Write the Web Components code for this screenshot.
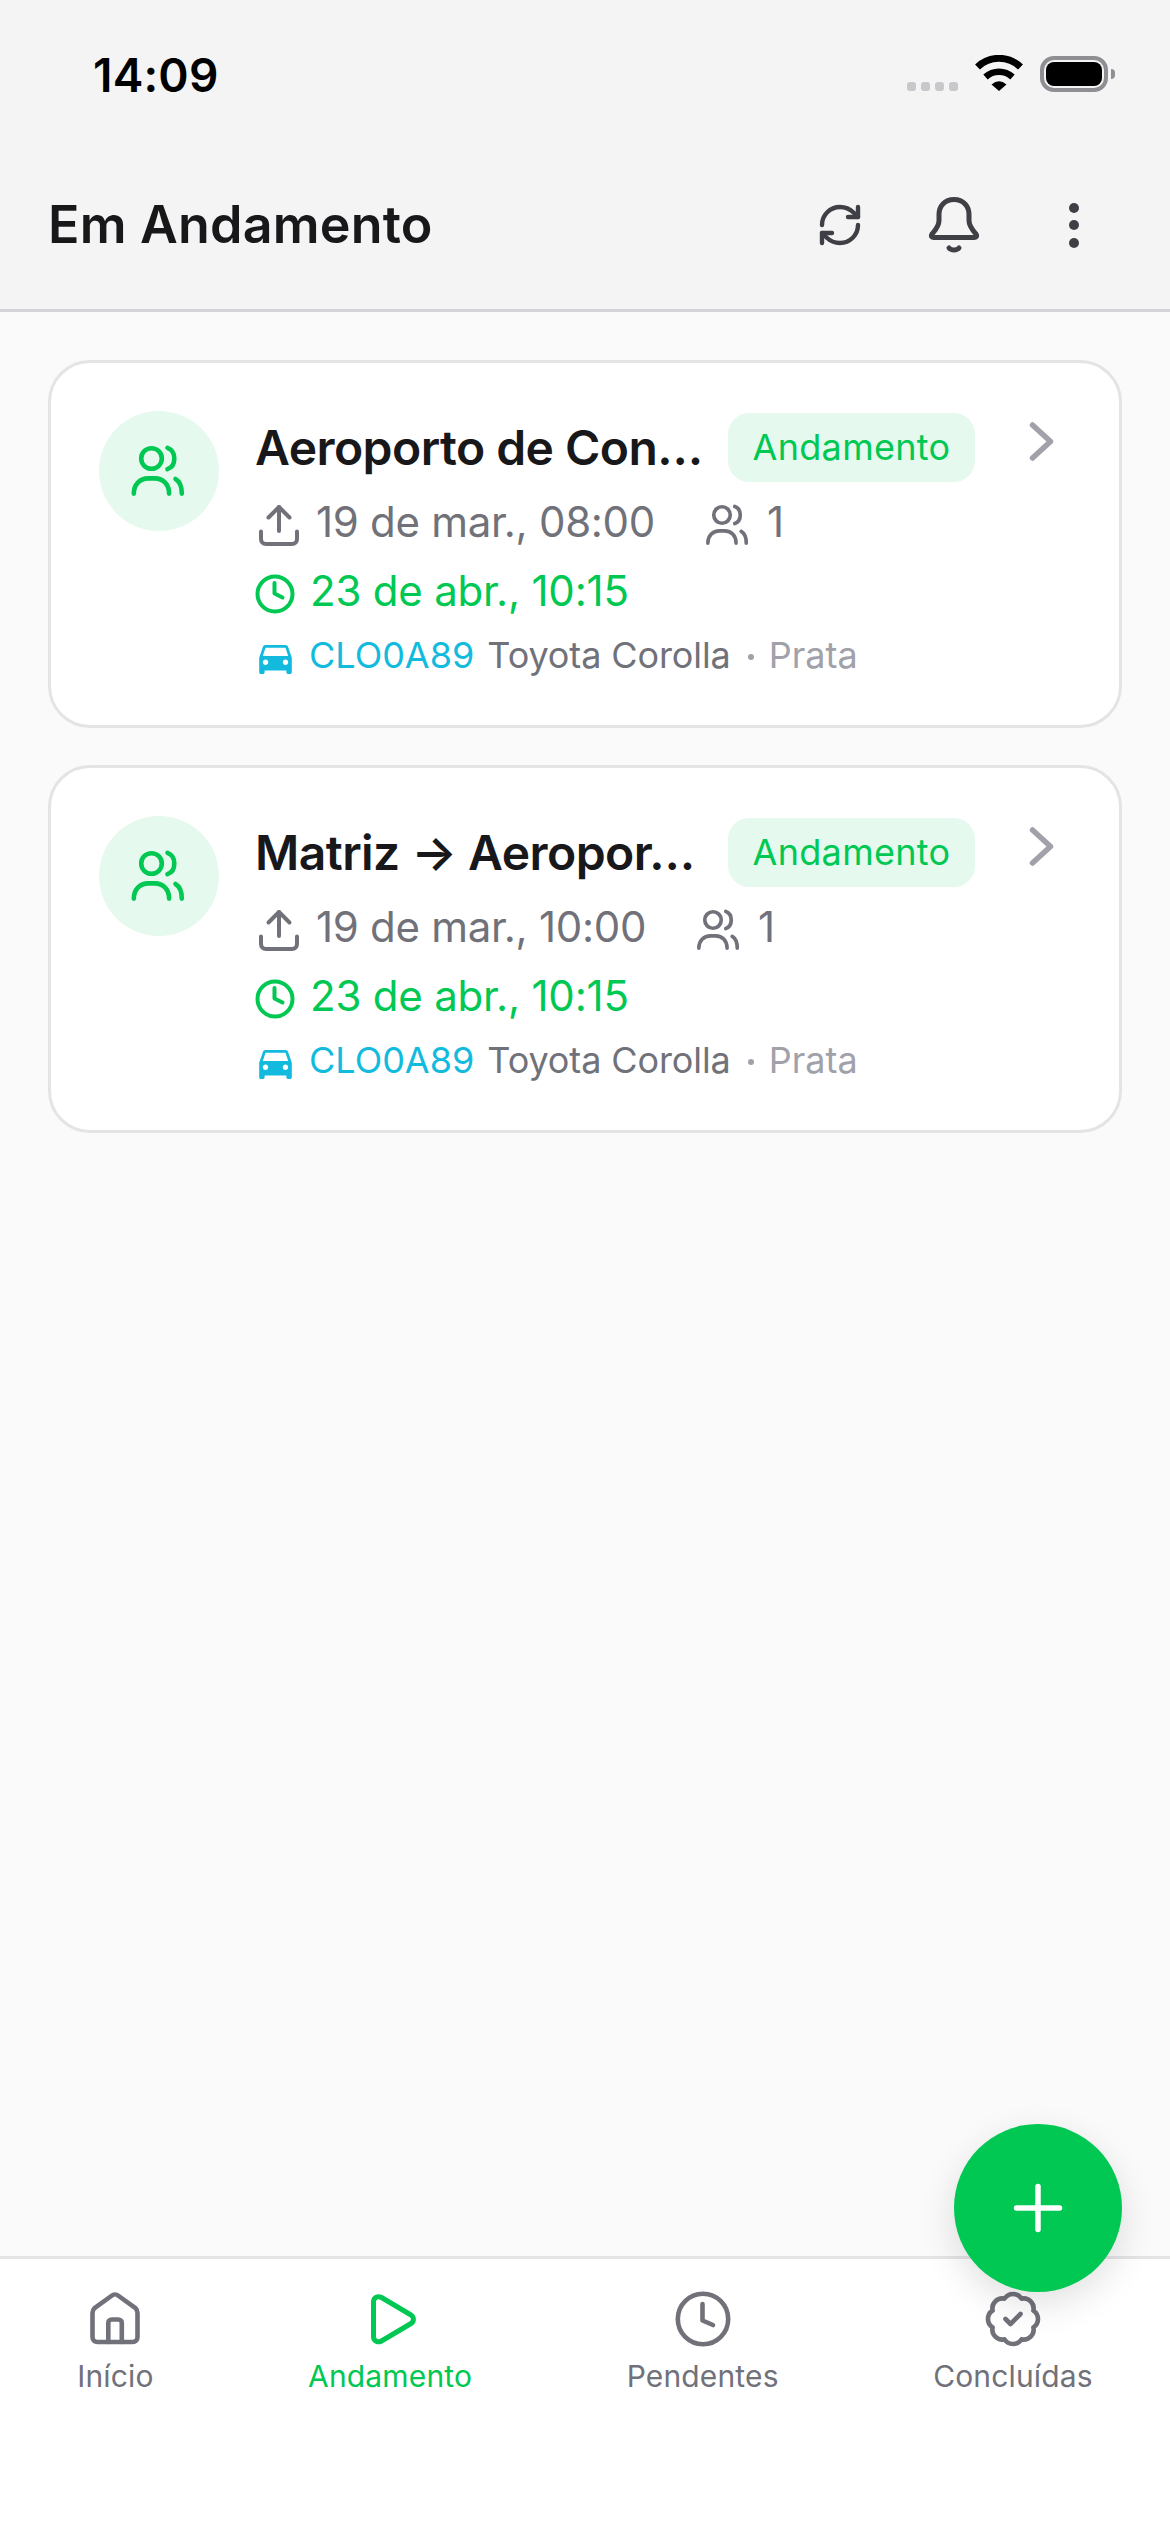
<!DOCTYPE html>
<html lang="pt-BR">
<head>
<meta charset="utf-8">
<title>Em Andamento</title>
<style>
  html, body { margin: 0; padding: 0; }
  body { font-family: Inter, "Noto Sans", sans-serif; background: #fafafa; }
</style>
</head>
<body>
<app-shell>
  <status-bar slot="status" time="14:09"></status-bar>
  <app-header slot="header">Em Andamento</app-header>

  <trip-card depart="19 de mar., 08:00" eta="23 de abr., 10:15" seats="1" plate="CLO0A89" model="Toyota Corolla" color="Prata" status="Andamento">Aeroporto de Con…</trip-card>
  <trip-card depart="19 de mar., 10:00" eta="23 de abr., 10:15" seats="1" plate="CLO0A89" model="Toyota Corolla" color="Prata" status="Andamento">Matriz → Aeropor…</trip-card>

  <fab-button slot="fab"></fab-button>

  <tab-bar slot="tabs">
    <tab-item icon="home">Início</tab-item>
    <tab-item icon="play" active>Andamento</tab-item>
    <tab-item icon="clock">Pendentes</tab-item>
    <tab-item icon="badge">Concluídas</tab-item>
  </tab-bar>
</app-shell>

<script>
const ICONS = {
  refresh: { box: '0 0 24 24', sw: 2.2, d: '<path d="M3 12a9 9 0 0 1 9-9 9.75 9.75 0 0 1 6.74 2.74L21 8"/><path d="M21 3v5h-5"/><path d="M21 12a9 9 0 0 1-9 9 9.75 9.75 0 0 1-6.74-2.74L3 16"/><path d="M8 16H3v5"/>' },
  bell: { box: '0 0 60 60', sw: 5, d: '<path d="M30 4.5c-9.5 0-15 7-15 15v6c0 6-4 10-7 13.5-1.5 2-.5 3.5 1.5 3.5h41c2 0 3-1.5 1.5-3.5-3-3.5-7-7.500-7-13.500v-6c0-8-5.500-15-15-15z"/><path d="M25 53c2 2.500 8 2.500 10 0"/>' },
  users: { box: '0 0 60 60', sw: 4.6, d: '<circle cx="22.500" cy="17.500" r="10.300"/><path d="M38.500 6.800c4.500 1.600 6.800 5.800 6.800 10.700s-2.300 9.100-6.800 10.700"/><path d="M4.800 52.600c0-9 6-15.200 14.500-15.200h6.500c8.500 0 14.300 6.200 14.300 15.200"/><path d="M46.500 38c4.300 2.500 6.300 8 6.300 14.600"/>' },
  upload: { box: '0 0 44 44', sw: 4, d: '<path d="M22 4v24"/><path d="M11.500 14.500 22 4l10.500 10.500"/><path d="M4 28.500V36c0 3 2 5 5 5h26c3 0 5-2 5-5v-7.500"/>' },
  eta: { box: '0 0 40 40', sw: 4, d: '<circle cx="20" cy="20" r="17.500"/><path d="M19.500 9v10.500l8 4"/>' },
  chevron: { box: '0 0 60 60', sw: 5.500, d: '<path d="M21.500 14 39.500 30.500 21.500 47"/>' },
  home: { box: '0 0 60 60', sw: 4.600, d: '<path d="M7.500 24c0-2 .7-3.600 2-4.900L27 6.500c1.600-1.400 4.400-1.400 6 0L50.500 19.100c1.300 1.300 2 2.900 2 4.900v24c0 3-2 5-5 5h-35c-3 0-5-2-5-5z"/><path d="M23.300 53V34c0-2 1.500-3.500 3.500-3.500h6.500c2 0 3.500 1.500 3.500 3.500v19"/>' },
  play: { box: '0 0 60 60', sw: 5, d: '<path d="M13.500 13c0-4.500 4.500-6.500 8-4.500L51 26c3.200 2 3.200 6.500 0 8.500L21.500 52c-3.500 2-8 0-8-4.500z"/>' },
  clock: { box: '0 0 60 60', sw: 4.600, d: '<circle cx="30" cy="30" r="25.200"/><path d="M29.500 15v16.500l10.500 4.500"/>' },
  badge: { box: '0 0 24 24', sw: 1.850, d: '<path d="M3.850 8.620a4 4 0 0 1 4.780-4.770 4 4 0 0 1 6.740 0 4 4 0 0 1 4.780 4.780 4 4 0 0 1 0 6.740 4 4 0 0 1-4.770 4.780 4 4 0 0 1-6.750 0 4 4 0 0 1-4.780-4.770 4 4 0 0 1 0-6.760Z"/><path d="m9 12 2 2 4-4"/>' },
  plus: { box: '0 0 48 48', sw: 5.500, d: '<path d="M24 2.500v43"/><path d="M2.500 24h43"/>' }
};

class UiIcon extends HTMLElement {
  connectedCallback() {
    const icon = ICONS[this.getAttribute('name')];
    const size = this.getAttribute('size') || 60;
    this.attachShadow({ mode: 'open' }).innerHTML = `
      <style>
        :host { display: block; width: ${size}px; height: ${size}px; flex: none; }
        svg { display: block; width: 100%; height: 100%; overflow: visible; }
      </style>
      <svg viewBox="${icon.box}" fill="none" stroke="currentColor" stroke-width="${icon.sw}" stroke-linecap="round" stroke-linejoin="round">${icon.d}</svg>`;
  }
}

class AppShell extends HTMLElement {
  constructor() {
    super();
    this.attachShadow({ mode: 'open' }).innerHTML = `
      <style>
        :host { display: flex; flex-direction: column; position: relative; width: 1170px; height: 2532px; background: #fafafa; overflow: hidden; }
        .top { background: #f4f4f5; border-bottom: 3px solid #d4d4d8; }
        main { flex: 1; display: flex; flex-direction: column; gap: 37px; padding: 48px; min-height: 0; }
        .fab { position: absolute; right: 48px; bottom: 240px; z-index: 2; }
      </style>
      <div class="top"><slot name="status"></slot><slot name="header"></slot></div>
      <main><slot></slot></main>
      <slot name="tabs"></slot>
      <div class="fab"><slot name="fab"></slot></div>`;
  }
}

class StatusBar extends HTMLElement {
  connectedCallback() {
    this.attachShadow({ mode: 'open' }).innerHTML = `
      <style>
        :host { display: flex; justify-content: space-between; height: 141px; box-sizing: border-box; padding: 48px 55px 0 93px; }
        .time { font: 600 46px/54px Inter, sans-serif; color: #000; letter-spacing: .2px; }
        .icons { display: flex; align-items: flex-end; gap: 17px; height: 37px; margin-top: 7px; }
        .cell { display: flex; gap: 5px; margin-bottom: 1px; }
        .cell i { width: 9px; height: 9px; border-radius: 3px; background: #c7c7cc; }
        .wifi { width: 48px; height: 36px; display: block; margin-bottom: 1px; }
        .battery { display: flex; align-items: center; gap: 3px; }
        .shell { width: 68px; height: 36px; box-sizing: border-box; border: 4px solid #8e8e93; border-radius: 14px; padding: 2px; }
        .shell b { display: block; height: 100%; background: #000; border-radius: 8px; }
        .nub { width: 4px; height: 10px; background: #8e8e93; border-radius: 0 5px 5px 0; }
      </style>
      <div class="time">${this.getAttribute('time')}</div>
      <div class="icons">
        <div class="cell"><i></i><i></i><i></i><i></i></div>
        <svg class="wifi" viewBox="0 0 48 36" fill="none" stroke="#000">
          <path d="M2.500 12A31 31 0 0 1 45.500 12" stroke-width="7"/>
          <path d="M10.500 22A20 20 0 0 1 37.500 22" stroke-width="6.500"/>
          <path d="M16.500 29.500Q24 23 31.500 29.500L24 36Z" fill="#000" stroke="none"/>
        </svg>
        <div class="battery"><div class="shell"><b></b></div><div class="nub"></div></div>
      </div>`;
  }
}

class AppHeader extends HTMLElement {
  constructor() {
    super();
    this.attachShadow({ mode: 'open' }).innerHTML = `
      <style>
        :host { display: flex; align-items: center; height: 168px; padding: 0 66px 0 48px; }
        h1 { flex: 1; margin: 0; font: 600 52px/64px Inter, sans-serif; letter-spacing: .2px; color: #18181b; }
        .actions { display: flex; align-items: center; gap: 60px; color: #3f3f46; }
        .dots { display: flex; flex-direction: column; align-items: center; justify-content: center; gap: 7.5px; width: 60px; height: 60px; }
        .dots i { width: 10px; height: 10px; border-radius: 50%; background: currentColor; }
      </style>
      <h1><slot></slot></h1>
      <div class="actions">
        <ui-icon name="refresh" size="48"></ui-icon>
        <ui-icon name="bell" size="60"></ui-icon>
        <div class="dots"><i></i><i></i><i></i></div>
      </div>`;
  }
}

class TripCard extends HTMLElement {
  connectedCallback() {
    const a = (n) => this.getAttribute(n);
    this.attachShadow({ mode: 'open' }).innerHTML = `
      <style>
        :host { display: flex; gap: 36px; box-sizing: border-box; height: 368px; padding: 48px; background: #fff; border: 3px solid #e4e4e7; border-radius: 42px; color: #71717a; }
        .avatar { width: 120px; height: 120px; border-radius: 50%; background: #e6f9ee; color: #00c853; display: flex; align-items: center; justify-content: center; flex: none; }
        .body { flex: 1; min-width: 0; display: flex; flex-direction: column; }
        .head { display: flex; height: 71px; margin-bottom: 10px; }
        .name { flex: 1; min-width: 0; font: 600 48px/73px Inter, sans-serif; letter-spacing: -.55px; color: #18181b; white-space: nowrap; overflow: hidden; }
        .status { width: 247px; box-sizing: border-box; height: 69px; margin: 2px 36px 0 28px; text-align: center; border-radius: 21px; background: #e6f9ee; color: #00c853; font: 400 36px/69px Inter, sans-serif; letter-spacing: .3px; }
        .chev { color: #a1a1aa; }
        .row { display: flex; align-items: center; font: 400 42px/60px Inter, sans-serif; letter-spacing: -.3px; white-space: nowrap; }
        .row.eta { color: #00c853; margin-top: 9px; gap: 15px; letter-spacing: -.2px; }
        .row.times ui-icon, .row.eta ui-icon { margin-top: 6px; }
        .up { margin: 0 15px 0 2px; }
        .people { margin: 0 15px 0 49px; }
        .car { display: flex; align-items: center; margin-top: 10px; font: 400 36px/48px Inter, sans-serif; white-space: nowrap; }
        .car svg { width: 33px; height: 29px; margin: 8px 17px 0 4px; flex: none; fill: #12bbde; }
        .plate { color: #12bbde; margin-right: 13px; }
        .model { letter-spacing: -.1px; }
        .dot { width: 6px; height: 6px; border-radius: 50%; background: #a1a1aa; margin: 3px 15px 0 17px; }
        .color { color: #a1a1aa; }
      </style>
      <div class="avatar"><ui-icon name="users" size="60"></ui-icon></div>
      <div class="body">
        <div class="head">
          <div class="name"><slot></slot></div>
          <div class="status">${a('status')}</div>
          <ui-icon class="chev" name="chevron" size="60"></ui-icon>
        </div>
        <div class="row times">
          <ui-icon class="up" name="upload" size="44"></ui-icon>
          <span>${a('depart')}</span>
          <ui-icon class="people" name="users" size="48"></ui-icon>
          <span>${a('seats')}</span>
        </div>
        <div class="row eta">
          <ui-icon name="eta" size="40"></ui-icon>
          <span>${a('eta')}</span>
        </div>
        <div class="car">
          <svg viewBox="3 5 18 16"><path d="M18.920 6.010C18.720 5.420 18.160 5 17.500 5h-11c-.66 0-1.210.42-1.420 1.010L3 12v8c0 .55.45 1 1 1h1c.55 0 1-.45 1-1v-1h12v1c0 .55.45 1 1 1h1c.55 0 1-.45 1-1v-8l-2.080-5.990zM6.500 16c-.83 0-1.500-.67-1.500-1.500S5.670 13 6.500 13s1.500.67 1.500 1.500S7.330 16 6.500 16zm11 0c-.83 0-1.500-.67-1.500-1.500s.67-1.500 1.500-1.500 1.500.67 1.500 1.500-.67 1.500-1.500 1.500zM5 11l1.500-4.500h11L19 11H5z"/></svg>
          <span class="plate">${a('plate')}</span>
          <span class="model">${a('model')}</span>
          <i class="dot"></i>
          <span class="color">${a('color')}</span>
        </div>
      </div>`;
  }
}

class FabButton extends HTMLElement {
  constructor() {
    super();
    this.attachShadow({ mode: 'open' }).innerHTML = `
      <style>
        :host { display: flex; align-items: center; justify-content: center; width: 168px; height: 168px; border-radius: 50%; background: #00c853; color: #fff; box-shadow: 0 12px 36px rgba(0, 0, 0, .12); }
      </style>
      <ui-icon name="plus" size="48"></ui-icon>`;
  }
}

class TabBar extends HTMLElement {
  constructor() {
    super();
    this.attachShadow({ mode: 'open' }).innerHTML = `
      <style>
        :host { display: flex; justify-content: space-around; height: 276px; box-sizing: border-box; padding-top: 29.500px; background: #fff; border-top: 3px solid #e4e4e7; }
      </style>
      <slot></slot>`;
  }
}

class TabItem extends HTMLElement {
  connectedCallback() {
    const active = this.hasAttribute('active');
    this.attachShadow({ mode: 'open' }).innerHTML = `
      <style>
        :host { display: flex; flex-direction: column; align-items: center; gap: 7.500px; color: ${active ? '#00c853' : '#71717a'}; }
        span { font: 400 30px/40px Inter, sans-serif; letter-spacing: .15px; }
      </style>
      <ui-icon name="${this.getAttribute('icon')}" size="60"></ui-icon>
      <span><slot></slot></span>`;
  }
}

customElements.define('ui-icon', UiIcon);
customElements.define('app-shell', AppShell);
customElements.define('status-bar', StatusBar);
customElements.define('app-header', AppHeader);
customElements.define('trip-card', TripCard);
customElements.define('fab-button', FabButton);
customElements.define('tab-bar', TabBar);
customElements.define('tab-item', TabItem);
</script>
</body>
</html>
